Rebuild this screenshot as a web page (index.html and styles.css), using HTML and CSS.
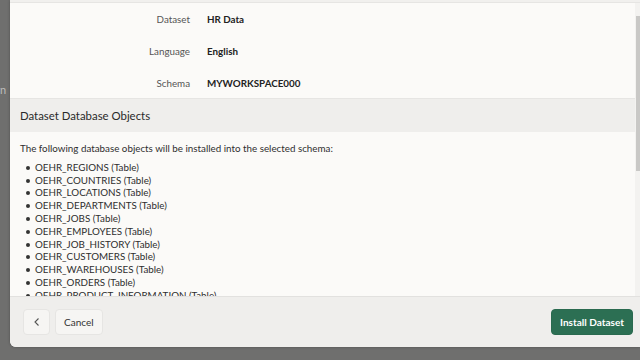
FILE: index.html
```html
<!DOCTYPE html>
<html lang="en">
  <head>
    <meta charset="UTF-8" />
    <meta name="viewport" content="width=device-width, initial-scale=1.0" />
    <title>Install Dataset</title>
    <link rel="stylesheet" href="styles.css">
  </head>
  <body>
    <div class="backdrop">
      <span class="behind">rn</span>
    </div>

    <div class="dialog">
      <div class="dialog-top"></div>

      <div class="dialog-body">
        <div class="summary">
          <div class="row">
            <span class="label">Dataset</span>
            <span class="value">HR Data</span>
          </div>
          <div class="row">
            <span class="label">Language</span>
            <span class="value">English</span>
          </div>
          <div class="row">
            <span class="label">Schema</span>
            <span class="value">MYWORKSPACE000</span>
          </div>
        </div>

        <div class="section-header">Dataset Database Objects</div>

        <div class="section-content">
          <p>The following database objects will be installed into the selected schema:</p>
          <ul class="objects">
            <li>OEHR_REGIONS (Table)</li>
            <li>OEHR_COUNTRIES (Table)</li>
            <li>OEHR_LOCATIONS (Table)</li>
            <li>OEHR_DEPARTMENTS (Table)</li>
            <li>OEHR_JOBS (Table)</li>
            <li>OEHR_EMPLOYEES (Table)</li>
            <li>OEHR_JOB_HISTORY (Table)</li>
            <li>OEHR_CUSTOMERS (Table)</li>
            <li>OEHR_WAREHOUSES (Table)</li>
            <li>OEHR_ORDERS (Table)</li>
            <li>OEHR_PRODUCT_INFORMATION (Table)</li>
            <li>OEHR_INVENTORIES (Table)</li>
          </ul>
        </div>

        <div class="scrollbar"><div class="thumb"></div></div>
      </div>

      <div class="dialog-footer">
        <div class="left-buttons">
          <button class="btn btn-icon" aria-label="Previous">
            <svg width="8" height="10" viewBox="0 0 8 10">
              <path d="M5.5 1.5 L2 5 L5.5 8.5" fill="none" stroke="#555" stroke-width="1.1" />
            </svg>
          </button>
          <button class="btn">Cancel</button>
        </div>
        <button class="btn btn-primary">Install Dataset</button>
      </div>
    </div>
  </body>
</html>
```

FILE: styles.css
```css
* {
  margin: 0;
  padding: 0;
  box-sizing: border-box;
}
html,
body {
  height: 100%;
  overflow: hidden;
}
body {
  background: #6f6f6e;
  font-family: Lato, "Open Sans", sans-serif;
  font-size: 9.8px;
  color: #333;
}
/* page behind the overlay */
.backdrop {
  position: absolute;
  left: 0;
  top: 0;
  width: 10px;
  height: 100%;
  overflow: hidden;
}
.behind {
  position: absolute;
  top: 83px;
  left: -4px;
  font-size: 11px;
  color: #bdbdbc;
}
.dialog {
  position: absolute;
  left: 10px;
  top: 0;
  right: 0;
  height: 347px;
  background: #fbfaf8;
  border-radius: 0 0 0 6px;
  box-shadow: 0 0 3px rgba(0, 0, 0, 0.3);
  display: flex;
  flex-direction: column;
  overflow: hidden;
}
.dialog-top {
  height: 3px;
  background: #f1f0ee;
  border-bottom: 1px solid #e6e5e3;
}
.dialog-body {
  position: relative;
  flex: 1;
  overflow: hidden;
}
/* dataset summary */
.row {
  display: flex;
  align-items: center;
  height: 32px;
}
.label {
  width: 180px;
  text-align: right;
  color: #555;
}
.value {
  margin-left: 17px;
  font-weight: bold;
  color: #222;
}
.section-header {
  margin-top: -1px;
  height: 34px;
  line-height: 34px;
  padding-left: 10px;
  font-size: 11.4px;
  color: #2a2a2a;
  background: #efeeec;
  border-top: 1px solid #e6e5e3;
}
.section-content {
  padding: 10px 10px 0;
  line-height: 12.8px;
  color: #2e2e2e;
}
.section-content p {
  margin-bottom: 6px;
}
.objects {
  list-style: none;
}
.objects li {
  position: relative;
  padding-left: 15px;
}
.objects li::before {
  content: "";
  position: absolute;
  left: 6px;
  top: 5px;
  width: 4px;
  height: 4px;
  border-radius: 50%;
  background: #333;
}
.scrollbar {
  position: absolute;
  top: 0;
  right: 0;
  width: 5px;
  height: 100%;
  background: #f3f2f0;
}
.thumb {
  margin-top: 13px;
  margin-left: 1px;
  height: 155px;
  background: #c9c8c6;
}
/* footer buttons */
.dialog-footer {
  height: 51px;
  background: #efeeec;
  border-top: 1px solid #e2e1df;
  display: flex;
  align-items: center;
  justify-content: space-between;
  padding: 0 7px 0 13px;
}
.left-buttons {
  display: flex;
  gap: 5px;
}
.btn {
  height: 26px;
  padding: 0 8px;
  font-family: inherit;
  font-size: 10px;
  color: #333;
  background: #f6f5f3;
  border: 1px solid #e6e5e3;
  border-radius: 4px;
}
.btn-icon {
  width: 27px;
  padding: 0;
  display: flex;
  align-items: center;
  justify-content: center;
}
.btn-primary {
  width: 82px;
  padding: 0;
  color: #fff;
  font-weight: bold;
  background: #2c6f53;
  border-color: #2a6a4f;
}
```
